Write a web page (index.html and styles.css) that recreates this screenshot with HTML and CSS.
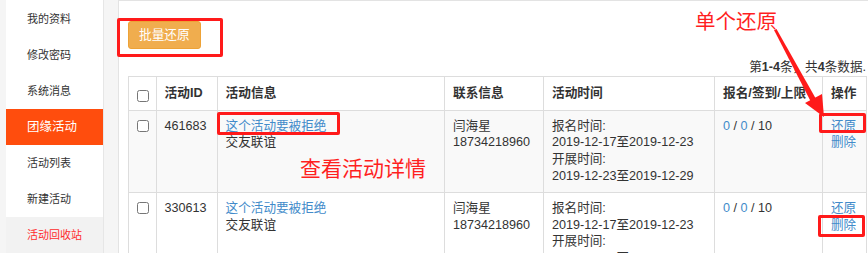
FILE: index.html
```html
<!DOCTYPE html>
<html lang="zh-CN">
<head>
    <meta charset="UTF-8">
    <meta name="viewport" content="width=device-width, initial-scale=1.0">
    <title>活动回收站</title>
    <link rel="stylesheet" href="styles.css">
</head>
<body>
    <div class="page">
        <div class="sidebar">
            <div class="menu-item">我的资料</div>
            <div class="menu-item">修改密码</div>
            <div class="menu-item">系统消息</div>
            <div class="menu-head">团缘活动</div>
            <div class="menu-item">活动列表</div>
            <div class="menu-item">新建活动</div>
            <div class="menu-item active">活动回收站</div>
        </div>

        <div class="main">
            <button class="btn-warning">批量还原</button>
            <div class="summary">第<b>1-4</b>条，共<b>4</b>条数据.</div>

            <table class="table">
                <colgroup>
                    <col style="width: 27.6px">
                    <col style="width: 61px">
                    <col style="width: 227.4px">
                    <col style="width: 99px">
                    <col style="width: 171px">
                    <col style="width: 108px">
                    <col style="width: 44px">
                </colgroup>
                <thead>
                    <tr>
                        <th><input type="checkbox"></th>
                        <th>活动ID</th>
                        <th>活动信息</th>
                        <th>联系信息</th>
                        <th>活动时间</th>
                        <th>报名/签到/上限</th>
                        <th>操作</th>
                    </tr>
                </thead>
                <tbody>
                    <tr class="striped">
                        <td><input type="checkbox"></td>
                        <td>461683</td>
                        <td><a href="#">这个活动要被拒绝</a><br>交友联谊</td>
                        <td>闫海星<br>18734218960</td>
                        <td>报名时间:<br>2019-12-17至2019-12-23<br>开展时间:<br>2019-12-23至2019-12-29</td>
                        <td><a href="#">0</a> / <a href="#">0</a> / 10</td>
                        <td><a href="#">还原</a><br><a href="#">删除</a></td>
                    </tr>
                    <tr>
                        <td><input type="checkbox"></td>
                        <td>330613</td>
                        <td><a href="#">这个活动要被拒绝</a><br>交友联谊</td>
                        <td>闫海星<br>18734218960</td>
                        <td>报名时间:<br>2019-12-17至2019-12-23<br>开展时间:<br>2019-12-23至2019-12-29</td>
                        <td><a href="#">0</a> / <a href="#">0</a> / 10</td>
                        <td><a href="#">还原</a><br><a href="#">删除</a></td>
                    </tr>
                </tbody>
            </table>
        </div>

        <!-- annotations drawn over the screenshot -->
        <div class="mark mark-batch"></div>
        <div class="mark mark-link"></div>
        <div class="mark mark-restore"></div>
        <div class="mark mark-delete"></div>
        <div class="note note-single">单个还原</div>
        <div class="note note-detail">查看活动详情</div>
        <svg class="arrow" width="868" height="253" viewBox="0 0 868 253">
            <polygon points="774,30 776.5,29 816,99 811,102" fill="#ff1a1a"/>
            <polygon points="805,103 822,94 824,117" fill="#ff1a1a"/>
        </svg>
    </div>
</body>
</html>
```

FILE: styles.css
```css
body {
    margin: 0;
    padding: 0;
    background-color: #f5f5f5;
    font-family: "Liberation Sans", "Noto Sans CJK SC", sans-serif;
    color: #333;
    overflow: hidden;
}
.page {
    position: relative;
    display: flex;
    align-items: flex-start;
    height: 253px;
}
.sidebar {
    width: 97px;
    margin-left: 6px;
    padding-top: 1px;
    background: white;
    border-right: 1px solid #e6e6e6;
    height: 252px;
    flex: none;
}
.menu-item {
    height: 36px;
    line-height: 36px;
    padding-left: 21px;
    font-size: 11px;
    color: #333;
}
.menu-item.active {
    background-color: #f2f2f2;
    color: #ff2d2d;
}
.menu-head {
    height: 36px;
    line-height: 36px;
    padding-left: 21px;
    font-size: 12.5px;
    color: white;
    background-color: #ff4d0d;
}
.main {
    flex: none;
    width: 738px;
    height: 253px;
    margin-left: 14px;
    padding: 20px 9px 0;
    background: white;
    border: 1px solid #e3e3e3;
    border-bottom: none;
    box-sizing: content-box;
}
.btn-warning {
    display: block;
    height: 28px;
    padding: 0 10px;
    background-color: #f0ad4e;
    border: 1px solid #eea236;
    border-radius: 3px;
    color: white;
    font-family: inherit;
    font-size: 12.7px;
    line-height: 26px;
}
.summary {
    margin-top: 10px;
    text-align: right;
    font-size: 12.6px;
    line-height: 16.8px;
    white-space: nowrap;
}
.table {
    width: 738px;
    table-layout: fixed;
    border-collapse: collapse;
    font-size: 12.6px;
    line-height: 16.8px;
}
.table th,
.table td {
    border: 1px solid #ddd;
    padding: 7px 8px;
    text-align: left;
    vertical-align: top;
    white-space: nowrap;
    overflow: hidden;
}
.table th {
    padding: 8px;
    font-weight: bold;
    vertical-align: bottom;
    font-size: 12.7px;
}
.table tr.striped td {
    background-color: #f9f9f9;
}
.table input[type="checkbox"] {
    display: block;
    width: 12px;
    height: 12px;
    margin: 2px 0 0;
}
.table a {
    color: #428bca;
    text-decoration: none;
}
.mark {
    position: absolute;
    border: 3px solid #ff1a1a;
    border-radius: 2px;
    box-sizing: border-box;
}
.mark-batch {
    left: 117px;
    top: 18px;
    width: 106px;
    height: 39px;
}
.mark-link {
    left: 217px;
    top: 112px;
    width: 123px;
    height: 23px;
}
.mark-restore {
    left: 819px;
    top: 113px;
    width: 47px;
    height: 20px;
}
.mark-delete {
    left: 818px;
    top: 215px;
    width: 47px;
    height: 22px;
}
.note {
    position: absolute;
    color: #ff1f1f;
    line-height: 24px;
    white-space: nowrap;
}
.note-single {
    left: 695px;
    top: 10px;
    font-size: 20.5px;
}
.note-detail {
    left: 300px;
    top: 157px;
    font-size: 21px;
}
.arrow {
    position: absolute;
    left: 0;
    top: 0;
}
```
